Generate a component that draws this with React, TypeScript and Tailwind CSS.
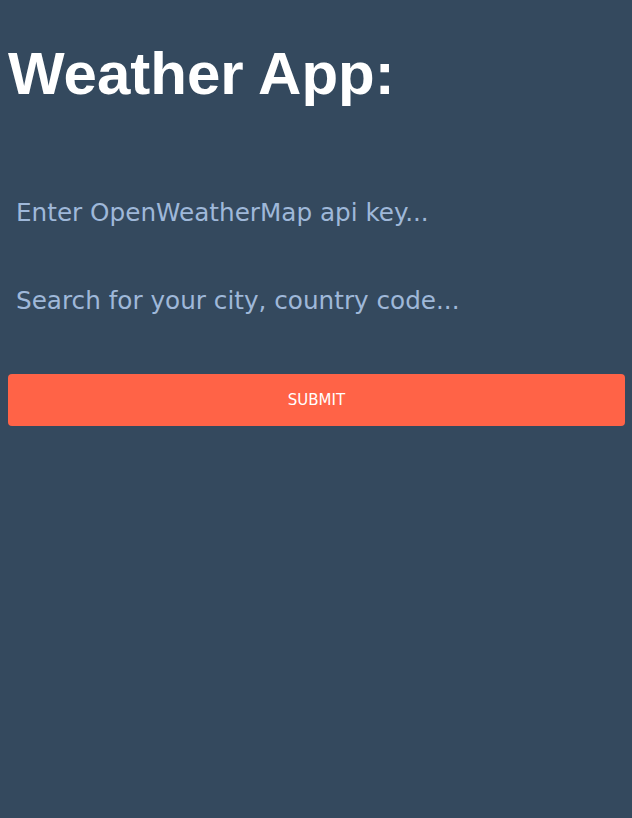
import { useState } from "react";

export default function App() {
  const [apiKey, setApiKey] = useState("");
  const [city, setCity] = useState("");

  return (
    <div className="min-h-[818px] bg-[#34495e] px-2">
      <h1 className="pt-[38px] font-['Liberation_Sans',Arial,sans-serif] text-[60px] font-bold leading-[72px] text-white">
        Weather App:
      </h1>

      <form
        className="mt-[77px] flex flex-col"
        onSubmit={(e) => e.preventDefault()}
      >
        <input
          value={apiKey}
          onChange={(e) => setApiKey(e.target.value)}
          placeholder="Enter OpenWeatherMap api key..."
          className="h-[50px] w-full bg-transparent px-2 font-['DejaVu_Sans',Verdana,sans-serif] text-[24.7px] text-white outline-none placeholder:text-[#9fb8d9]"
        />
        <input
          value={city}
          onChange={(e) => setCity(e.target.value)}
          placeholder="Search for your city, country code..."
          className="mt-[38px] h-[50px] w-full bg-transparent px-2 font-['DejaVu_Sans',Verdana,sans-serif] text-[24.7px] text-white outline-none placeholder:text-[#9fb8d9]"
        />
        <button
          type="submit"
          className="mt-[49px] h-[52px] w-[617px] rounded-[4px] bg-[#ff6347] font-['DejaVu_Sans',Verdana,sans-serif] text-[15px] uppercase text-white"
        >
          Submit
        </button>
      </form>
    </div>
  );
}
